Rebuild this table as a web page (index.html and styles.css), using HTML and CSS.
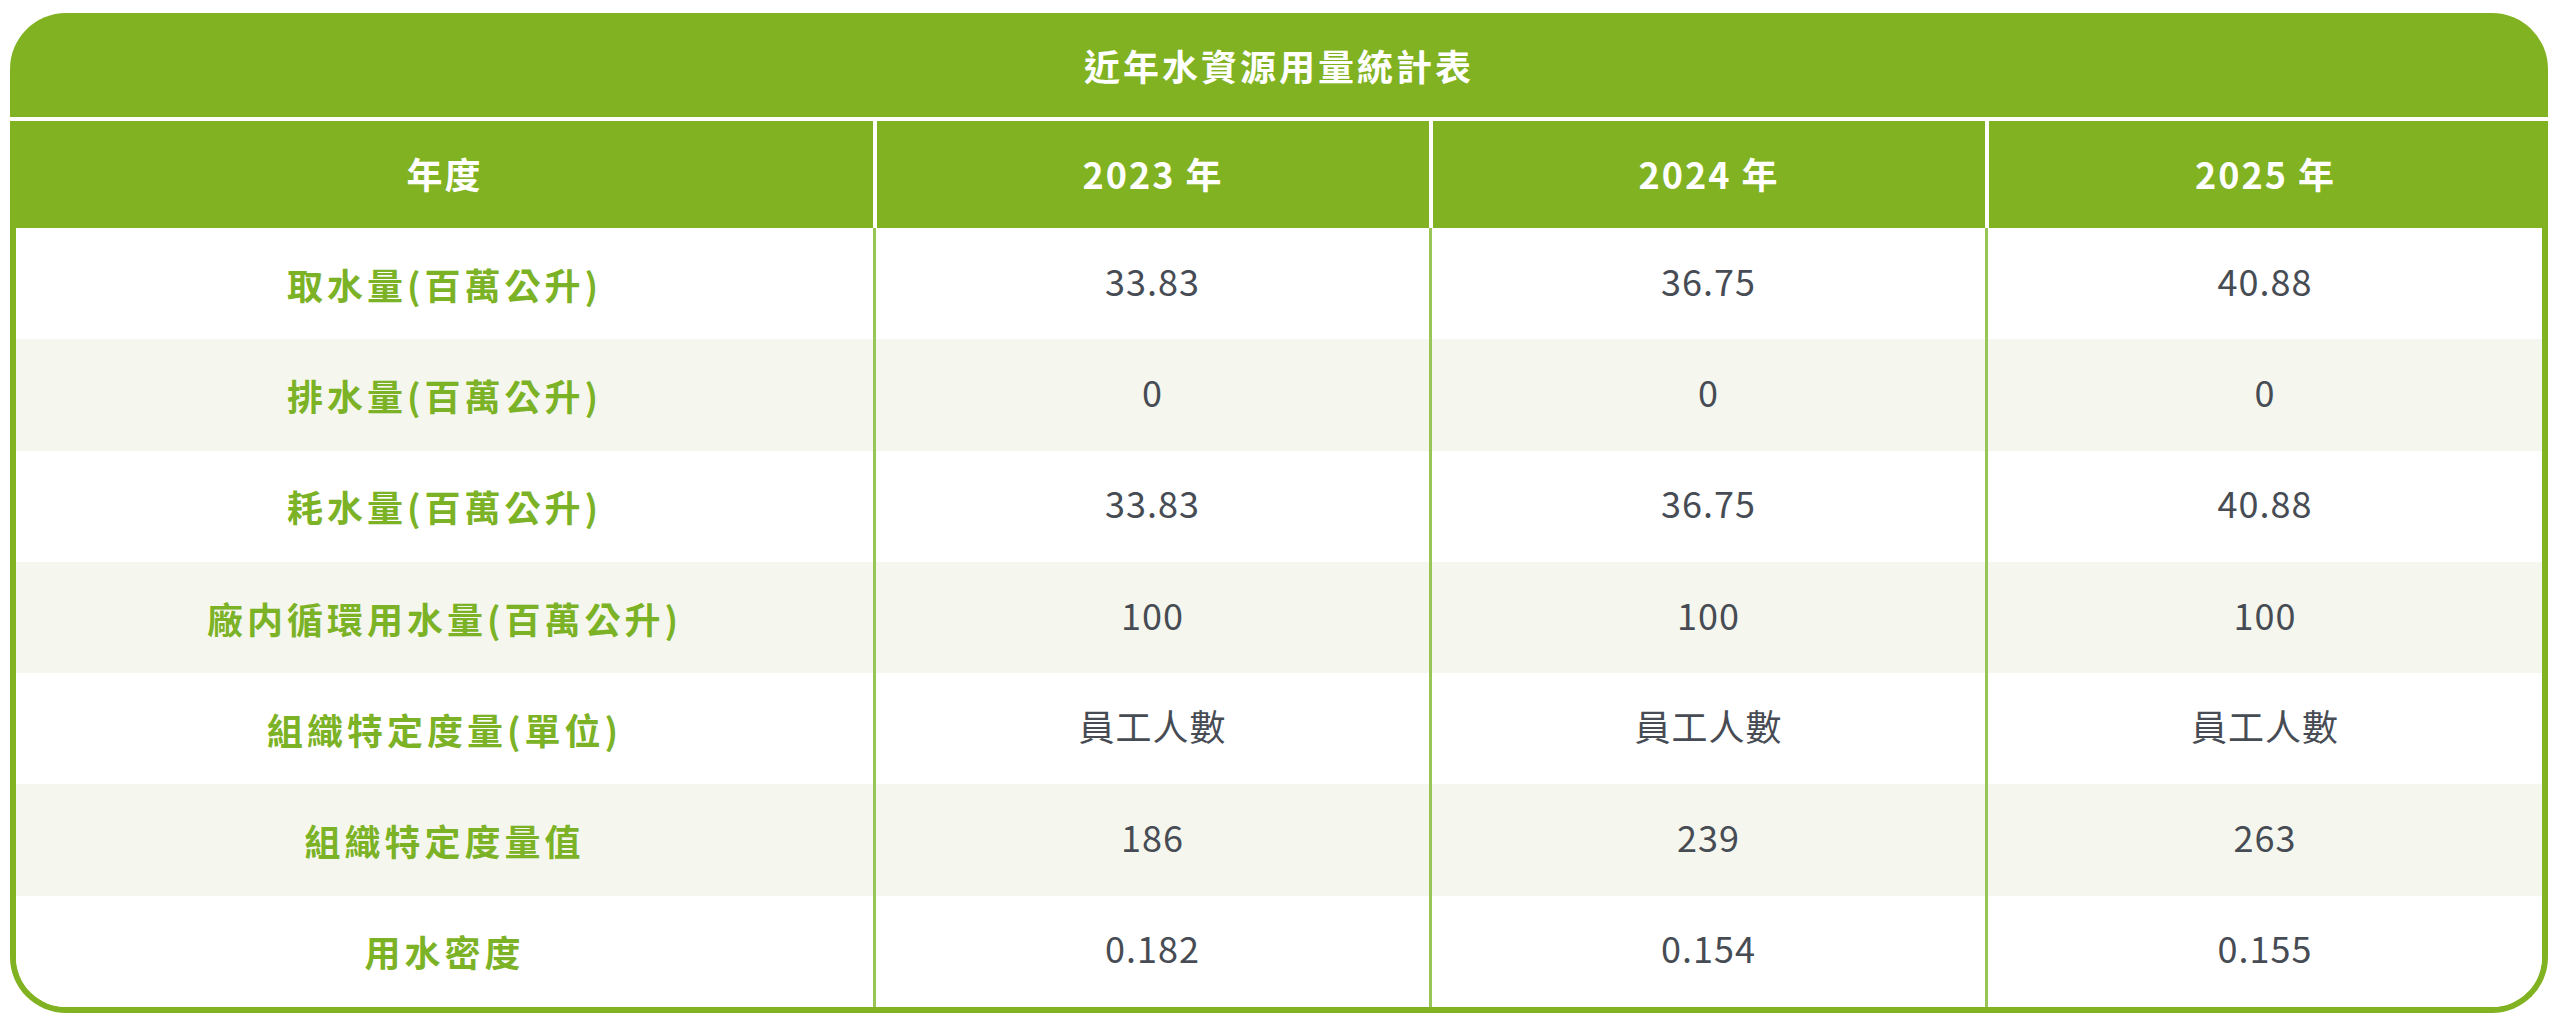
FILE: index.html
```html
<!DOCTYPE html>
<html lang="zh-Hant">
<head>
<meta charset="utf-8">
<title>近年水資源用量統計表</title>
<link rel="stylesheet" href="styles.css">
</head>
<body>
<div class="wrap">
  <div class="card">
    <div class="title">近年水資源用量統計表</div>
    <div class="table">
      <div class="row head">
        <div class="cell">年度</div>
        <div class="cell">2023 年</div>
        <div class="cell">2024 年</div>
        <div class="cell">2025 年</div>
      </div>
      <div class="row">
        <div class="cell label">取水量(百萬公升)</div>
        <div class="cell val">33.83</div>
        <div class="cell val">36.75</div>
        <div class="cell val">40.88</div>
      </div>
      <div class="row alt">
        <div class="cell label">排水量(百萬公升)</div>
        <div class="cell val">0</div>
        <div class="cell val">0</div>
        <div class="cell val">0</div>
      </div>
      <div class="row">
        <div class="cell label">耗水量(百萬公升)</div>
        <div class="cell val">33.83</div>
        <div class="cell val">36.75</div>
        <div class="cell val">40.88</div>
      </div>
      <div class="row alt">
        <div class="cell label">廠内循環用水量(百萬公升)</div>
        <div class="cell val">100</div>
        <div class="cell val">100</div>
        <div class="cell val">100</div>
      </div>
      <div class="row">
        <div class="cell label">組織特定度量(單位)</div>
        <div class="cell val">員工人數</div>
        <div class="cell val">員工人數</div>
        <div class="cell val">員工人數</div>
      </div>
      <div class="row alt">
        <div class="cell label">組織特定度量值</div>
        <div class="cell val">186</div>
        <div class="cell val">239</div>
        <div class="cell val">263</div>
      </div>
      <div class="row">
        <div class="cell label">用水密度</div>
        <div class="cell val">0.182</div>
        <div class="cell val">0.154</div>
        <div class="cell val">0.155</div>
      </div>
    </div>
  </div>
</div>
</body>
</html>
```

FILE: styles.css
```css
* { box-sizing: border-box; }

html, body {
  margin: 0;
  padding: 0;
  background: #ffffff;
}

body {
  font-family: "Noto Sans CJK TC", "Noto Sans CJK SC", "Noto Sans", sans-serif;
  font-size: 36px;
}

.wrap {
  padding: 13px 12px 0 10px;
}

.card {
  display: flex;
  flex-direction: column;
  gap: 4px;
}

.title {
  height: 104px;
  background: #81b222;
  border-radius: 56px 56px 0 0;
  color: #ffffff;
  font-weight: 700;
  letter-spacing: 3px;
  display: flex;
  align-items: center;
  justify-content: center;
}

.table {
  border: 6px solid #81b222;
  border-top: none;
  border-radius: 0 0 56px 56px;
  overflow: hidden;
}

.row {
  display: grid;
  grid-template-columns: 857fr 556fr 556fr 557fr;
  height: 111.3px;
  background: #ffffff;
}

.row.alt {
  background: #f5f7ee;
}

.row.head {
  height: 107px;
  background: #81b222;
}

.cell {
  display: flex;
  align-items: center;
  justify-content: center;
  line-height: 1;
}

.cell + .cell {
  border-left: 3px solid #98c556;
}

.head .cell {
  color: #ffffff;
  font-weight: 700;
  letter-spacing: 2px;
  padding-bottom: 4px;
}

.head .cell + .cell {
  border-left: 4px solid #ffffff;
}

.label {
  color: #7cb226;
  font-weight: 700;
  letter-spacing: 4px;
}

.val {
  color: #474c54;
  font-weight: 400;
  letter-spacing: 1px;
  padding-bottom: 8px;
}
```
